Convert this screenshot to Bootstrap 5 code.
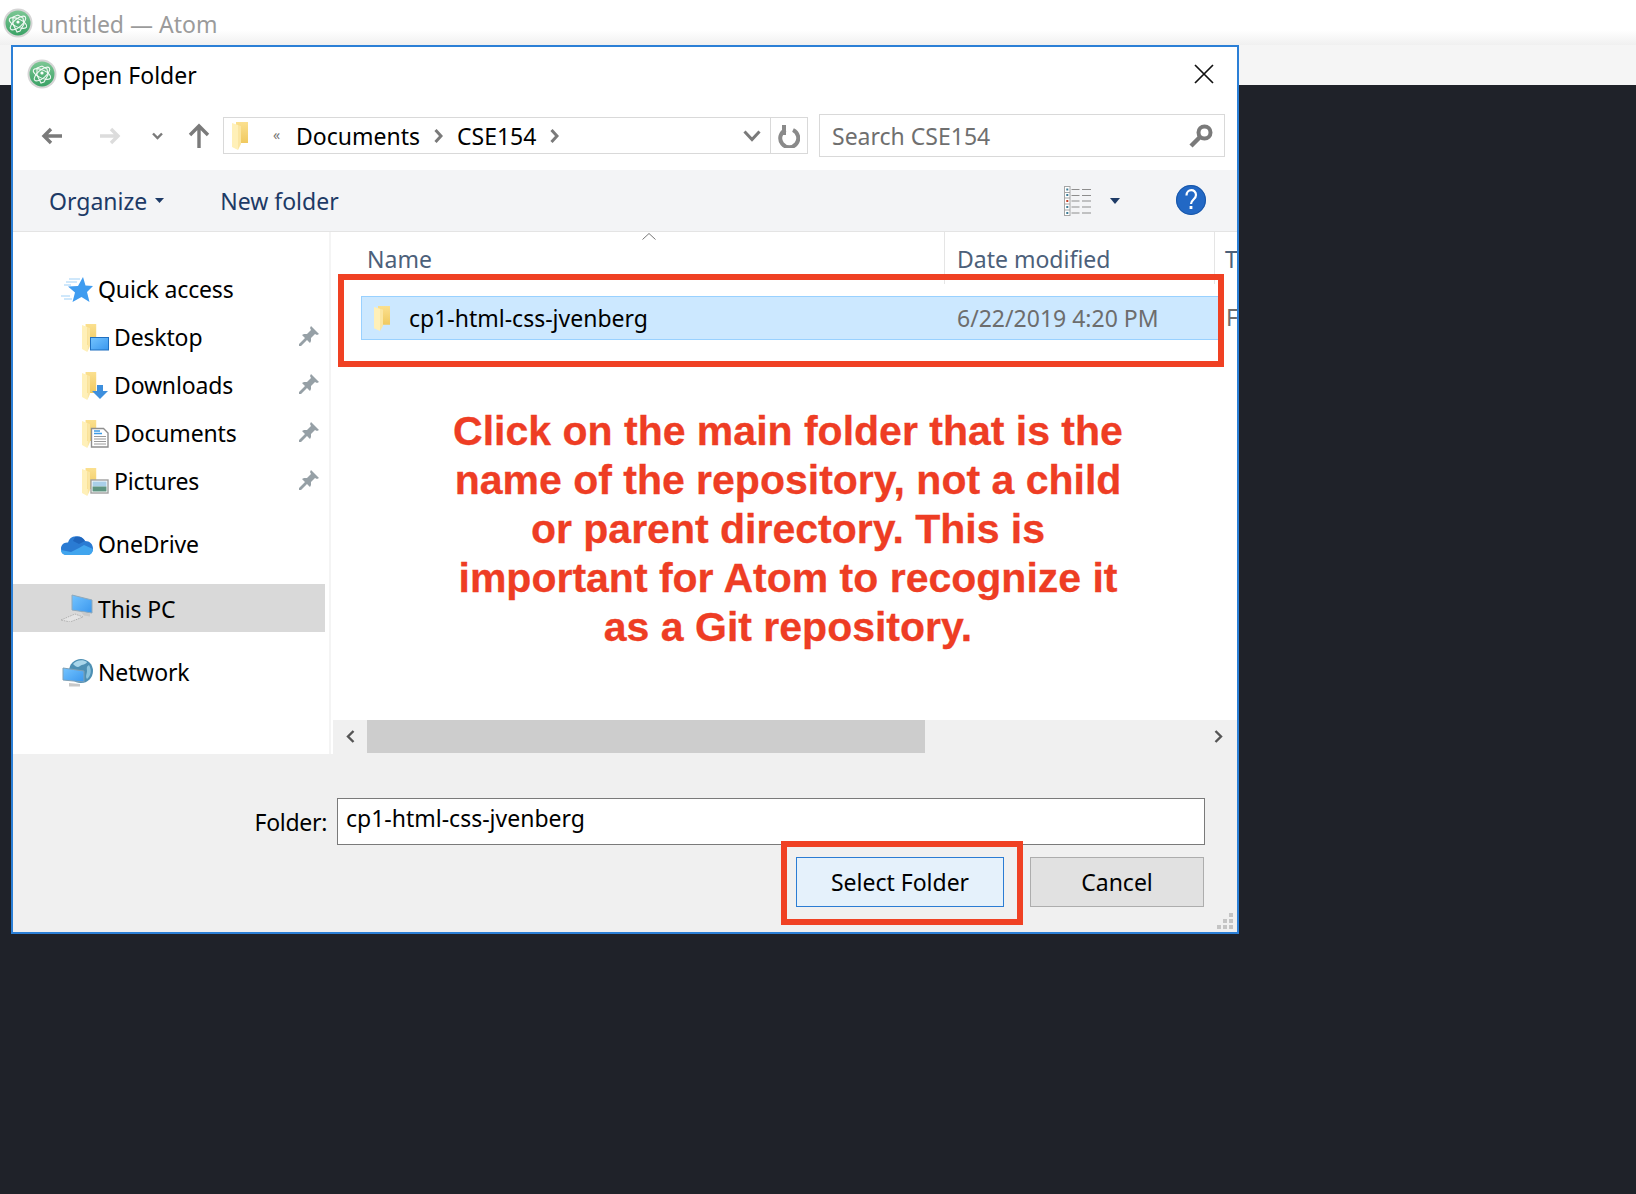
<!DOCTYPE html>
<html lang="en">
<head>
<meta charset="utf-8">
<title>Open Folder</title>
<link href="https://cdn.jsdelivr.net/npm/bootstrap@5.3.0/dist/css/bootstrap.min.css" rel="stylesheet">
<style>
html,body{height:1194px;overflow:hidden}
body{background:#1f2229;font-family:"Noto Sans","Open Sans",sans-serif;font-size:23px;color:#000;position:relative;line-height:1.2}
.defs-holder{position:absolute;width:0;height:0}
.app-top{height:45px;color:#9b9b9b;padding-left:3px;gap:7px;background-image:linear-gradient(#fff 30px,#f0f0f0 45px)}
.app-top span{padding-top:4px}
.app-strip{height:40px;background:#f5f5f5}
.win{position:absolute;left:11px;top:45px;width:1228px;height:889px;border:2px solid #2b7fd6;background:#fff}
.win-title{height:63px;padding-left:14px;padding-bottom:9px;gap:6px}
.win-title span{padding-top:4px}
.win-close{margin-left:auto;margin-right:23px}
.win-nav{height:60px;padding:0 12px 9px 27px}
.nav-fwd{margin-left:38px}
.nav-drop{margin-left:30px}
.nav-up{margin-left:25px;margin-right:13px}
.addr{width:585px;height:37px;border:1px solid #d9d9d9;padding-left:8px}
.addr-txt{padding-top:2px}
.addr-lead{margin-left:23px;margin-right:14px;color:#777;font-size:14px;width:9px}
.addr-sep{margin:0 14px}
.addr-drop{margin-left:auto;margin-right:9px}
.addr-refresh{border-left:1px solid #d9d9d9;width:37px;height:100%}
.searchbox{margin-left:auto;width:406px;height:43px;border:1px solid #d9d9d9;padding:0 11px 0 12px;color:#6f6f6f}
.searchbox span{padding-top:3px}
.toolbar-row{height:62px;background:#f3f4f6;border-bottom:1px solid #e4e4e4;color:#1d3a66;padding-left:36px;padding-right:31px}
.toolbar-row span{padding-top:2px}
.tb-caret{margin-left:8px;margin-right:56px}
.tb-view{margin-left:auto;margin-right:18px}
.tb-help{margin-left:56px;margin-top:-2px}
.panes{height:522px}
.side{width:318px;flex:none;border-right:2px solid #f4f4f4;padding-top:34px;letter-spacing:-.15px}
.side-item{height:48px;padding-left:48px;gap:5px}
.side-sub{padding-left:69px;gap:4px}
.side-pin{margin-left:auto;margin-right:10px;margin-top:-5px}
.gap-one{margin-top:15px}
.gap-two{margin-top:17px}
.side-sel{background:#d9d9d9;width:312px}
.side-sel span{padding-top:3px}
.list-pane{min-width:0;overflow:hidden;position:relative}
.list-head{height:52px;color:#4c607a;position:relative;padding-top:14px}
.col-name{flex:none;width:613px;padding-left:36px;height:38px}
.col-date{flex:none;width:270px;padding-left:12px;border-left:1px solid #e5e5e5;height:52px;margin-top:-14px;padding-top:14px}
.col-type{flex:none;padding-left:10px;border-left:1px solid #e5e5e5;height:52px;margin-top:-14px;padding-top:14px}
.sort-up{position:absolute;left:311px;top:1px}
.list-body{height:436px;overflow:hidden}
.file-wrap{margin-top:12px;margin-left:30px;width:875px;height:44px}
.file-row{width:860px;height:44px;flex:none;background:#cce8ff;border:1px solid #99d1ff;padding-left:12px}
.file-row span{padding-top:2px}
.file-name{width:548px;margin-left:17px}
.file-date{color:#6d6d6d}
.file-type{color:#6d6d6d;margin-left:5px}
.note{margin-top:67px;padding-left:8px;color:#ee3d24;font-family:"Liberation Sans",Arial,sans-serif;font-weight:700;font-size:41px;line-height:49px;text-align:center;-webkit-text-stroke:.3px #ee3d24}
.hscroll{height:34px;margin-left:2px;background:#f0f0f0}
.hs-arrow{width:34px;height:33px}
.hs-thumb{width:558px;height:33px;background:#cdcdcd}
.hs-right{margin-left:auto;width:37px}
.win-foot{height:178px;background:#f0f0f0;padding:44px 32px 0 0;position:relative}
.foot-label{margin-right:10px;padding-top:11px;letter-spacing:-.3px}
.foot-input{width:868px;height:47px;border:1px solid #7a7a7a;border-radius:0;background:#fff;padding:6px 8px 0;font-size:23px;color:#000;line-height:1.2;flex:none}
.foot-btns{margin-top:12px;gap:26px;padding-right:1px}
.btn-win{border-radius:0;font-size:23px;height:50px;line-height:1.2;padding:2px 0 0;color:#000}
.btn-ok{width:208px;background:#e5f1fb;border:1px solid #2b7cd3}
.btn-no{width:174px;background:#e1e1e1;border:1px solid #adadad}
.grip{position:absolute;right:3px;bottom:2px}
.ann{position:absolute;border:6px solid #f04123;z-index:5;pointer-events:none}
.ann-row{left:325px;top:227px;width:886px;height:93px}
.ann-btn{left:768px;top:794px;width:242px;height:84px}
svg{display:block;flex:none}
</style>
</head>
<body>
<svg class="defs-holder" aria-hidden="true">
<defs>
<linearGradient id="gAtom" x1="0" y1="0" x2="0" y2="1"><stop offset="0" stop-color="#7cc794"/><stop offset="1" stop-color="#3aa265"/></linearGradient>
<linearGradient id="gFold" x1="0" y1="0" x2="0" y2="1"><stop offset="0" stop-color="#fbe08f"/><stop offset="1" stop-color="#f0c95f"/></linearGradient>
<linearGradient id="gScr" x1="0" y1="0" x2="1" y2="1"><stop offset="0" stop-color="#74c4ff"/><stop offset="1" stop-color="#3a97ee"/></linearGradient>
<symbol id="i-atom" viewBox="0 0 30 30">
<circle cx="15" cy="15" r="14.5" fill="#d5d5d5"/><circle cx="15" cy="15" r="12.5" fill="url(#gAtom)"/>
<g fill="none" stroke="#fff" stroke-width="1.1" opacity=".92">
<ellipse cx="15" cy="15" rx="9.5" ry="4" transform="rotate(25 15 15)"/>
<ellipse cx="15" cy="15" rx="9.5" ry="4" transform="rotate(-40 15 15)"/>
<path d="M10 9l5-2 5 3 1 6-4 7-3 1-4-8z"/>
</g>
<circle cx="15" cy="14" r="1.6" fill="#fff"/>
</symbol>
<symbol id="i-folder" viewBox="0 0 18 28" preserveAspectRatio="none">
<path d="M4 0H16V21H4z" fill="url(#gFold)"/>
<path d="M0 1L6 3V28L0 25z" fill="#fff0b8"/>
<path d="M6 3L9 4V22L6 28z" fill="#fbe6a2"/>
</symbol>
<symbol id="i-pin" viewBox="0 0 20 20">
<path d="M12 0l8 8-2 1-2-1-4 4 0 3-1 2-3-3-6 6-2 0 0-2 6-6-3-3 2-1 3 0 4-4-1-2z" fill="#96a0a6"/>
</symbol>
</defs>
</svg>

<div class="app-top d-flex align-items-center">
  <svg width="30" height="30"><use href="#i-atom"/></svg>
  <span>untitled — Atom</span>
</div>
<div class="app-strip"></div>

<div class="win d-flex flex-column">
  <div class="win-title d-flex align-items-center">
    <svg width="30" height="30"><use href="#i-atom"/></svg>
    <span>Open Folder</span>
    <svg class="win-close" width="20" height="20" viewBox="0 0 20 20"><path d="M1 1L19 19M19 1L1 19" stroke="#111" stroke-width="1.7" fill="none"/></svg>
  </div>

  <div class="win-nav d-flex align-items-center">
    <svg width="22" height="18" viewBox="0 0 22 18"><path d="M22 9H4M11 2L4 9l7 7" fill="none" stroke="#7a7a7a" stroke-width="3.4"/></svg>
    <svg class="nav-fwd" width="22" height="18" viewBox="0 0 22 18"><path d="M0 9H18M11 2l7 7-7 7" fill="none" stroke="#dcdcdc" stroke-width="3.4"/></svg>
    <svg class="nav-drop" width="11" height="8" viewBox="0 0 11 8"><path d="M1 1.5l4.5 4.5L10 1.5" fill="none" stroke="#7a7a7a" stroke-width="2.4"/></svg>
    <svg class="nav-up" width="22" height="25" viewBox="0 0 22 25"><path d="M11 25V4M2 12l9-9 9 9" fill="none" stroke="#7a7a7a" stroke-width="3.4"/></svg>
    <div class="addr d-flex align-items-center">
      <svg width="18" height="28"><use href="#i-folder"/></svg>
      <span class="addr-lead">«</span>
      <span class="addr-txt">Documents</span>
      <svg class="addr-sep" width="9" height="14" viewBox="0 0 9 14"><path d="M1.5 1l5.500 6-5.500 6" fill="none" stroke="#7a7a7a" stroke-width="3"/></svg>
      <span class="addr-txt">CSE154</span>
      <svg class="addr-sep" width="9" height="14" viewBox="0 0 9 14"><path d="M1.5 1l5.500 6-5.500 6" fill="none" stroke="#7a7a7a" stroke-width="3"/></svg>
      <svg class="addr-drop" width="18" height="12" viewBox="0 0 18 12"><path d="M1.5 1.5L9 9.5l7.5-8" fill="none" stroke="#7a7a7a" stroke-width="3"/></svg>
      <div class="addr-refresh d-flex align-items-center justify-content-center">
        <svg width="22" height="24" viewBox="0 0 22 24"><path d="M7.500 6a9 9 0 1 0 7.500 0" fill="none" stroke="#8a8a8a" stroke-width="4"/><path d="M4 1v10h4V1z" fill="#8a8a8a"/></svg>
      </div>
    </div>
    <div class="searchbox d-flex align-items-center justify-content-between">
      <span>Search CSE154</span>
      <svg width="24" height="24" viewBox="0 0 24 24"><circle cx="15.5" cy="8.5" r="6" fill="none" stroke="#7a7a7a" stroke-width="4"/><path d="M10.5 13.5L2 22" stroke="#7a7a7a" stroke-width="4.4"/></svg>
    </div>
  </div>

  <div class="toolbar-row d-flex align-items-center">
    <span>Organize</span>
    <svg class="tb-caret" width="9" height="5" viewBox="0 0 9 5"><path d="M0 0h9L4.5 5z" fill="#1d3a66"/></svg>
    <span>New folder</span>
    <svg class="tb-view" width="28" height="30" viewBox="0 0 28 30">
      <rect x=".5" y=".5" width="5.5" height="29" fill="#fff" stroke="#a5a5a5"/>
      <path d="M.5 6.5h5.5M.5 12h5.5M.5 18h5.5M.5 24h5.5" stroke="#a5a5a5"/>
      <path d="M2.3 2.5h2v2h-2zM2.3 8h2v2h-2zM2.3 20h2v2h-2zM2.3 26h2v2h-2z" fill="#3b7a94"/><path d="M2.3 14h2v2h-2z" fill="#c23b22"/>
      <path d="M7.5 3.5h8M18 3.5h9M7.5 9.5h8M18 9.5h9M7.5 15h8M18 15h9M7.5 21h8M18 21h9M7.5 27h8M18 27h9" stroke="#8d8d8d" stroke-width="1.2"/>
    </svg>
    <svg width="10" height="6" viewBox="0 0 10 6"><path d="M0 0h10L5 6z" fill="#1d3a66"/></svg>
    <svg class="tb-help" width="30" height="30" viewBox="0 0 30 30"><circle cx="15" cy="15" r="15" fill="#2268c5"/><circle cx="15" cy="15" r="14.5" fill="none" stroke="#1a57a8"/><path d="M10.5 10.5c0-7 9.5-7 9.5-.5 0 4.5-5 4.5-5 9" fill="none" stroke="#fff" stroke-width="2.2"/><rect x="13.6" y="21" width="2.8" height="3" fill="#fff"/></svg>
  </div>

  <div class="panes d-flex">
    <div class="side">
      <div class="side-item d-flex align-items-center">
        <svg width="32" height="26" viewBox="0 0 32 26"><path d="M22 0l2.500 8.500 7.500.5-6 6 2.500 10-8-5-9 5 2.500-9.500-7-6 10-.5z" fill="#3f9cf0"/><path d="M8 2h11M5 5h11M3 8h7M0 19h9M3 22h8" stroke="#9fd0f7" stroke-width="1"/></svg>
        <span>Quick access</span>
      </div>
      <div class="side-item side-sub d-flex align-items-center">
        <svg width="28" height="28" viewBox="0 0 28 28"><use href="#i-folder" width="16" height="28"/><rect x="8.500" y="13.500" width="18" height="12.500" fill="url(#gScr)" stroke="#1f6fc0"/></svg>
        <span>Desktop</span>
        <svg class="side-pin" width="20" height="20"><use href="#i-pin"/></svg>
      </div>
      <div class="side-item side-sub d-flex align-items-center">
        <svg width="28" height="28" viewBox="0 0 28 28"><use href="#i-folder" width="16" height="28"/><path d="M15 13h6v6h5l-8 8-8-8h5z" fill="#3d8fdd"/></svg>
        <span>Downloads</span>
        <svg class="side-pin" width="20" height="20"><use href="#i-pin"/></svg>
      </div>
      <div class="side-item side-sub d-flex align-items-center">
        <svg width="28" height="28" viewBox="0 0 28 28"><use href="#i-folder" width="16" height="28"/><path d="M9.500 8.500h12l4.500 4.500v14H9.500z" fill="#fff" stroke="#8f8f8f" stroke-width="1.400"/><path d="M12 11h6M12 13.500h8" stroke="#3d9be5" stroke-width="1.500"/><path d="M12 16.500h12M12 19h12M12 21.500h12M12 24h12" stroke="#9a9a9a"/></svg>
        <span>Documents</span>
        <svg class="side-pin" width="20" height="20"><use href="#i-pin"/></svg>
      </div>
      <div class="side-item side-sub d-flex align-items-center">
        <svg width="28" height="28" viewBox="0 0 28 28"><use href="#i-folder" width="16" height="28"/><rect x="9" y="12" width="17" height="13" fill="#fff" stroke="#a0a0a0" stroke-width="1.400"/><rect x="10.500" y="13.500" width="14" height="5" fill="#a9cfe8"/><path d="M10.500 18.500h14V23.500h-14z" fill="#5d9480"/></svg>
        <span>Pictures</span>
        <svg class="side-pin" width="20" height="20"><use href="#i-pin"/></svg>
      </div>
      <div class="side-item gap-one d-flex align-items-center">
        <svg width="32" height="22" viewBox="0 0 32 22"><path d="M7 8.500A9 8 0 0 1 24 7c5 0 8 3.500 8 7.500S29 21 27 21H6c-4 0-6-3-6-6.500s3-6.500 7-6z" fill="#2a7bd3"/><path d="M14 3a9 8 0 0 1 10 4l-6 3-6-3z" fill="#1f66bd"/><path d="M0 16c0 3 2 5 6 5h21c3 0 5-3 5-6l-9-4-5 3-8 4z" fill="#41a5ee"/></svg>
        <span>OneDrive</span>
      </div>
      <div class="side-item side-sel gap-one d-flex align-items-center">
        <svg width="32" height="28" viewBox="0 0 32 28"><path d="M11 1l20 5v13l-20-3z" fill="url(#gScr)" stroke="#8fa9bb"/><path d="M20 18l9 1.500v3l-6-1z" fill="#c9c9c9"/><path d="M0 26l14-6 8 3-13 5z" fill="#e4e4e4" stroke="#a5a5a5" stroke-width=".8" stroke-dasharray="1.500 1"/></svg>
        <span>This PC</span>
      </div>
      <div class="side-item gap-two d-flex align-items-center">
        <svg width="32" height="28" viewBox="0 0 32 28"><circle cx="20" cy="12" r="12" fill="#4d8fb3"/><path d="M12 5c3-4 10-5 14-2-1 3-5 2-7 4s-4 1-7-2z" fill="#a9d6ea"/><path d="M28 6c3 5 2 11-2 14-2-3 0-5 0-8s-1-4 2-6z" fill="#8cc4de"/><path d="M2 9l21 3v11L2 21z" fill="url(#gScr)" stroke="#7fa0b5"/><path d="M8 24l11 1v2.500H8z" fill="#c8c8c8"/></svg>
        <span>Network</span>
      </div>
    </div>

    <div class="list-pane flex-grow-1 d-flex flex-column">
      <div class="list-head d-flex flex-shrink-0">
        <svg class="sort-up" width="14" height="7" viewBox="0 0 14 7"><path d="M.5 6.500L7 .5l6.500 6" fill="none" stroke="#777" stroke-width="1"/></svg>
        <div class="col-name">Name</div>
        <div class="col-date">Date modified</div>
        <div class="col-type">T</div>
      </div>
      <div class="list-body flex-shrink-0">
        <div class="file-wrap d-flex align-items-center">
          <div class="file-row d-flex align-items-center">
            <svg width="18" height="25"><use href="#i-folder" width="18" height="25"/></svg>
            <span class="file-name">cp1-html-css-jvenberg</span>
            <span class="file-date">6/22/2019 4:20 PM</span>
          </div>
          <span class="file-type">F</span>
        </div>
        <div class="note">Click on the main folder that is the<br>name of the repository, not a child<br>or parent directory. This is<br>important for Atom to recognize it<br>as a Git repository.</div>
      </div>
      <div class="hscroll d-flex flex-shrink-0">
        <div class="hs-arrow d-flex align-items-center justify-content-center"><svg width="9" height="13" viewBox="0 0 9 13"><path d="M7.500 1L2 6.500 7.500 12" fill="none" stroke="#555" stroke-width="2.400"/></svg></div>
        <div class="hs-thumb"></div>
        <div class="hs-arrow hs-right d-flex align-items-center justify-content-center"><svg width="9" height="13" viewBox="0 0 9 13"><path d="M1.500 1L7 6.500 1.500 12" fill="none" stroke="#555" stroke-width="2.400"/></svg></div>
      </div>
    </div>
  </div>

  <div class="win-foot">
    <div class="d-flex justify-content-end">
      <span class="foot-label">Folder:</span>
      <div class="foot-input form-control">cp1-html-css-jvenberg</div>
    </div>
    <div class="foot-btns d-flex justify-content-end">
      <button type="button" class="btn btn-win btn-ok">Select Folder</button>
      <button type="button" class="btn btn-win btn-no">Cancel</button>
    </div>
    <svg class="grip" width="18" height="18" viewBox="0 0 18 18"><path d="M13 1h4v4h-4zM7 7h4v4H7zM13 7h4v4h-4zM1 13h4v4H1zM7 13h4v4H7zM13 13h4v4h-4z" fill="#c4c4c4"/></svg>
  </div>

  <div class="ann ann-row"></div>
  <div class="ann ann-btn"></div>
</div>
<script src="https://cdn.jsdelivr.net/npm/bootstrap@5.3.0/dist/js/bootstrap.bundle.min.js"></script>
</body>
</html>
